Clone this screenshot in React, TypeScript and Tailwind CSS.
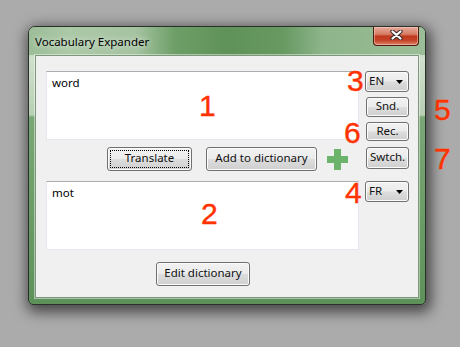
import React from "react";

const font = { fontFamily: '"Noto Sans", "Liberation Sans", Arial, sans-serif' };

const baseCls =
  "relative flex items-center rounded-[3px] border border-[#707070] bg-[linear-gradient(180deg,#f2f2f2_0%,#ebebeb_48%,#dddddd_52%,#cfcfcf_100%)] shadow-[inset_0_0_0_1px_#fbfbfb] text-[11.5px] leading-none text-[#111]";

function Btn({ label, className, focus }: { label: string; className: string; focus?: boolean }) {
  return (
    <div className={`${baseCls} justify-center ${className}`}>
      <span className="relative -top-[1px]">{label}</span>
      {focus && <span className="absolute inset-[2px] border border-dotted border-black" />}
    </div>
  );
}

function Combo({ label }: { label: string }) {
  return (
    <div className={`${baseCls} h-[21px] w-[44px] justify-between pl-[3px] pr-[5px]`}>
      <span className="relative -top-[1px]">{label}</span>
      <svg width="7" height="4" viewBox="0 0 7 4">
        <path d="M0 0 H7 L3.5 4 Z" fill="#000" />
      </svg>
    </div>
  );
}

function Num({ n, cls }: { n: string; cls: string }) {
  return (
    <div
      className={`absolute text-[30px] leading-[30px] text-[#ff3300] [-webkit-text-stroke:0.4px_#ff3300] ${cls}`}
      style={{ fontFamily: '"Liberation Sans", Arial, sans-serif' }}
    >
      {n}
    </div>
  );
}

export default function App() {
  return (
    <div className="relative h-[347px] w-[460px] overflow-hidden bg-[#ababab]" style={font}>
      {/* Window */}
      <div className="absolute left-[28px] top-[26px] flex h-[279px] w-[398px] flex-col overflow-hidden rounded-t-[7px] rounded-b-[5px] border border-[#2a302a] bg-[linear-gradient(180deg,#9ebf9a_0px,#cfe0cc_32px,#b8cfb4_88px,#7aa776_90px,#5e915a_100%)] shadow-[2px_4px_14px_3px_rgba(0,0,0,0.6)]">
        {/* Title bar */}
        <div className="flex h-[28px] shrink-0 items-start bg-[linear-gradient(90deg,#9cbd98_0%,#abc8a7_10%,#a5c3a1_27%,#6d9e67_37%,#5f9258_50%,#679961_64%,#8db48a_74%,#9bbd97_100%)]">
          <div className="pl-[6px] pt-[7px] text-[11.5px] leading-[15px] text-black [text-shadow:0_0_6px_rgba(255,255,255,0.9)]">
            Vocabulary Expander
          </div>
          <div className="ml-auto mr-[6px] flex h-[19px] w-[46px] items-center justify-center rounded-b-[4px] border border-t-0 border-[#4e1b10] bg-[linear-gradient(180deg,#e6ab9c_0%,#d77c66_40%,#c0381c_52%,#c5442a_75%,#de8668_100%)] shadow-[inset_0_0_0_1px_rgba(255,220,210,0.45)]">
            <svg width="13" height="10" viewBox="0 0 13 10" className="relative -top-[1px]">
              <path d="M2.5 1.5 L10.5 8.5 M10.5 1.5 L2.5 8.5" stroke="#3a2a2a" strokeWidth="4.2" strokeLinecap="round" />
              <path d="M2.5 1.5 L10.5 8.5 M10.5 1.5 L2.5 8.5" stroke="#ffffff" strokeWidth="2.2" strokeLinecap="round" />
            </svg>
          </div>
        </div>
        {/* Client */}
        <div className="flex-1 px-[6px] pb-[6px]">
          <div className="flex h-full border border-[#7d977b] bg-[#f0f0f0] pl-[10px] pt-[15px] shadow-[0_0_0_1px_rgba(255,255,255,0.45)]">
            <div className="flex w-[313px] flex-col">
              <div className="h-[69px] border border-[#e3e9ef] border-t-[#abadb3] bg-white pl-[5px] pt-[3px] text-[11.5px] leading-[15px] text-black">
                word
              </div>
              <div className="mt-[7px] flex h-[24px] items-center">
                <Btn label="Translate" className="ml-[61px] h-[24px] w-[85px]" focus />
                <Btn label="Add to dictionary" className="ml-[14px] h-[24px] w-[111px]" />
                <svg width="21" height="21" viewBox="0 0 21 21" className="ml-[10px]">
                  <path d="M7 0 H14 V7 H21 V14 H14 V21 H7 V14 H0 V7 H7 Z" fill="#6cb36c" />
                </svg>
              </div>
              <div className="mt-[10px] h-[69px] border border-[#e3e9ef] border-t-[#abadb3] bg-white pl-[5px] pt-[3px] text-[11.5px] leading-[15px] text-black">
                mot
              </div>
              <Btn label="Edit dictionary" className="ml-[110px] mt-[12px] h-[24px] w-[94px]" />
            </div>
            <div className="ml-[6px] flex w-[44px] flex-col">
              <Combo label="EN" />
              <Btn label="Snd." className="ml-[1px] mt-[5px] h-[20px] w-[43px]" />
              <Btn label="Rec." className="ml-[1px] mt-[5px] h-[19px] w-[43px]" />
              <Btn label="Swtch." className="ml-[1px] mt-[6px] h-[22px] w-[43px]" />
              <div className="mt-[12px]">
                <Combo label="FR" />
              </div>
            </div>
          </div>
        </div>
      </div>

      {/* Annotations */}
      <Num n="1" cls="left-[199px] top-[91px]" />
      <Num n="2" cls="left-[201px] top-[199px]" />
      <Num n="3" cls="left-[347px] top-[66px]" />
      <Num n="4" cls="left-[345px] top-[178px]" />
      <Num n="5" cls="left-[434px] top-[95px]" />
      <Num n="6" cls="left-[344px] top-[118px]" />
      <Num n="7" cls="left-[434px] top-[144px]" />
    </div>
  );
}
